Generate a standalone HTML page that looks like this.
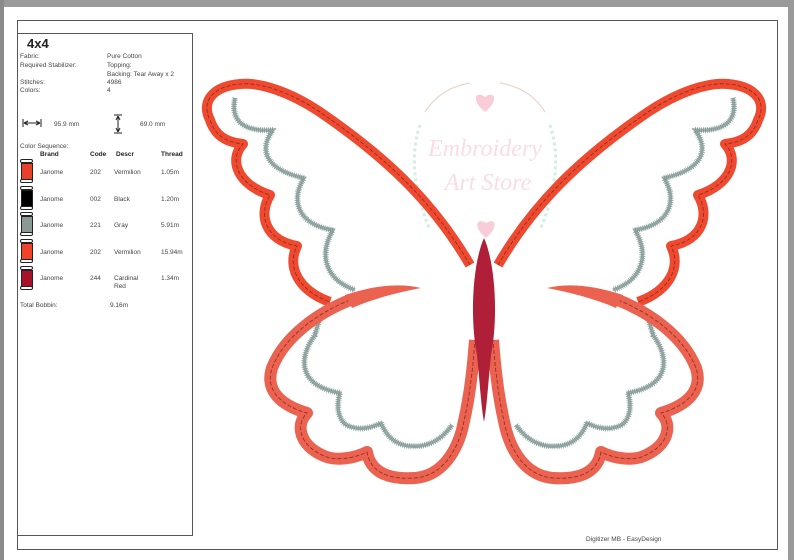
<!DOCTYPE html>
<html><head><meta charset="utf-8">
<style>
html,body{margin:0;padding:0}
body{width:794px;height:560px;position:relative;background:#fff;overflow:hidden;font-family:"Liberation Sans",sans-serif;color:#333}
.t{position:absolute;font-size:6.5px;line-height:8px;white-space:nowrap;color:#444}
.b{font-weight:bold;color:#222}
.sp{position:absolute;left:20px;width:13px;height:24px}
.sp .c{position:absolute;left:1px;top:4px;width:10px;height:16px;border:1px solid #222}
.sp .e{position:absolute;left:0;width:11px;height:2px;border:1px solid #222;border-radius:2px;background:#fff}
</style></head><body>
<div style="position:absolute;left:0;top:0;width:794px;height:7px;background:#9a9a9a"></div>
<div style="position:absolute;left:0;top:0;width:4px;height:560px;background:#8a8a8a"></div>
<div style="position:absolute;left:788px;top:0;width:6px;height:560px;background:#9a9a9a"></div>
<div style="position:absolute;left:17px;top:20px;width:759px;height:528px;border:1px solid #555"></div>
<div style="position:absolute;left:17px;top:33px;width:174px;height:501px;border:1px solid #555"></div>

<div class="t b" style="left:27px;top:37px;font-size:13px;line-height:14px">4x4</div>
<div class="t" style="left:20px;top:53px">Fabric:</div>
<div class="t" style="left:20px;top:62px">Required Stabilizer:</div>
<div class="t" style="left:107px;top:53px">Pure Cotton</div>
<div class="t" style="left:107px;top:62px">Topping:</div>
<div class="t" style="left:107px;top:71px">Backing: Tear Away x 2</div>
<div class="t" style="left:20px;top:79px">Stitches:</div>
<div class="t" style="left:20px;top:87px">Colors:</div>
<div class="t" style="left:107px;top:79px">4986</div>
<div class="t" style="left:107px;top:87px">4</div>

<svg style="position:absolute;left:22px;top:118px" width="20" height="10"><line x1="1" y1="1" x2="1" y2="9" stroke="#222"/><line x1="19" y1="1" x2="19" y2="9" stroke="#222"/><line x1="2" y1="5" x2="18" y2="5" stroke="#222"/><path d="M2 5 L6 3 M2 5 L6 7 M18 5 L14 3 M18 5 L14 7" stroke="#222"/></svg>
<div class="t" style="left:54px;top:121px">95.9 mm</div>
<svg style="position:absolute;left:112px;top:114px" width="12" height="20"><line x1="2" y1="1" x2="10" y2="1" stroke="#222"/><line x1="2" y1="19" x2="10" y2="19" stroke="#222"/><line x1="6" y1="2" x2="6" y2="18" stroke="#222"/><path d="M6 2 L4 6 M6 2 L8 6 M6 18 L4 14 M6 18 L8 14" stroke="#222"/></svg>
<div class="t" style="left:140px;top:121px">69.0 mm</div>

<div class="t" style="left:20px;top:143px">Color Sequence:</div>
<div class="t b" style="left:40px;top:151px">Brand</div>
<div class="t b" style="left:90px;top:151px">Code</div>
<div class="t b" style="left:116px;top:151px">Descr</div>
<div class="t b" style="left:161px;top:151px">Thread</div>

<div class="sp" style="top:159px"><div class="c" style="background:#e8402a"></div><div class="e" style="top:0"></div><div class="e" style="top:20px"></div></div>
<div class="sp" style="top:186px"><div class="c" style="background:#000"></div><div class="e" style="top:0"></div><div class="e" style="top:20px"></div></div>
<div class="sp" style="top:212px"><div class="c" style="background:#8a9996"></div><div class="e" style="top:0"></div><div class="e" style="top:20px"></div></div>
<div class="sp" style="top:239px"><div class="c" style="background:#f0432a"></div><div class="e" style="top:0"></div><div class="e" style="top:20px"></div></div>
<div class="sp" style="top:266px"><div class="c" style="background:#a8112a"></div><div class="e" style="top:0"></div><div class="e" style="top:20px"></div></div>

<div class="t" style="left:40px;top:169px">Janome</div><div class="t" style="left:90px;top:169px">202</div><div class="t" style="left:114px;top:169px">Vermilion</div><div class="t" style="left:161px;top:169px">1.05m</div>
<div class="t" style="left:40px;top:196px">Janome</div><div class="t" style="left:90px;top:196px">002</div><div class="t" style="left:114px;top:196px">Black</div><div class="t" style="left:161px;top:196px">1.20m</div>
<div class="t" style="left:40px;top:222px">Janome</div><div class="t" style="left:90px;top:222px">221</div><div class="t" style="left:114px;top:222px">Gray</div><div class="t" style="left:161px;top:222px">5.91m</div>
<div class="t" style="left:40px;top:249px">Janome</div><div class="t" style="left:90px;top:249px">202</div><div class="t" style="left:114px;top:249px">Vermilion</div><div class="t" style="left:161px;top:249px">15.94m</div>
<div class="t" style="left:40px;top:275px">Janome</div><div class="t" style="left:90px;top:275px">244</div><div class="t" style="left:114px;top:275px">Cardinal<br>Red</div><div class="t" style="left:161px;top:275px">1.34m</div>
<div class="t" style="left:20px;top:302px">Total Bobbin:</div>
<div class="t" style="left:110px;top:302px">9.16m</div>

<div class="t" style="left:586px;top:536px">Digitizer MB - EasyDesign</div>

<svg style="position:absolute;left:0;top:0" width="794" height="560">
<g opacity="0.7">
<path d="M425,112 Q440,88 470,83" fill="none" stroke="#e2c6b0" stroke-width="1.2"/>
<path d="M545,112 Q530,88 500,83" fill="none" stroke="#e2c6b0" stroke-width="1.2"/>
<path d="M420,125 Q405,170 430,230" fill="none" stroke="#bfe6da" stroke-width="3" stroke-dasharray="3 3"/>
<path d="M550,125 Q565,170 540,230" fill="none" stroke="#bfe6da" stroke-width="3" stroke-dasharray="3 3"/>
<path d="M485,112 C470,100 476,90 485,97 C494,90 500,100 485,112Z" fill="#f7b8c8"/>
<path d="M486,238 C472,226 477,217 486,223 C495,217 500,226 486,238Z" fill="#f7b8c8"/>
<text x="485" y="156" text-anchor="middle" font-family="Liberation Serif,serif" font-style="italic" font-size="24" fill="#f8d0da">Embroidery</text>
<text x="488" y="190" text-anchor="middle" font-family="Liberation Serif,serif" font-style="italic" font-size="24" fill="#f8d0da">Art Store</text>
</g>
<g id="L">
<path d="M470,265 C435,205 390,160 320,112 C290,92 260,82 240,84 C215,86 200,100 210,120 C215,135 225,142 243,144 C228,160 238,185 270,195 C258,215 265,240 297,246 C287,266 297,290 330,302" fill="none" stroke="#ef4a30" stroke-width="10" stroke-linejoin="round"/>
<path d="M470,265 C435,205 390,160 320,112 C290,92 260,82 240,84 C215,86 200,100 210,120 C215,135 225,142 243,144 C228,160 238,185 270,195 C258,215 265,240 297,246 C287,266 297,290 330,302" fill="none" stroke="#8a2a1c" stroke-width="0.8" stroke-dasharray="4 2"/>
<path id="g1" d="M235,98 C230,122 245,132 273,130 C258,150 266,170 304,178 C290,200 298,225 333,230 C318,255 326,280 355,290" fill="none" stroke="#9aaeab" stroke-width="3.5"/>
<path d="M235,98 C230,122 245,132 273,130 C258,150 266,170 304,178 C290,200 298,225 333,230 C318,255 326,280 355,290" fill="none" stroke="#7f9592" stroke-width="6" stroke-dasharray="0.7 1.3"/>
<path d="M330,305 C318,318 318,325 315,335 C300,355 295,385 340,393 C335,410 340,425 352,427 C360,430 372,428 381,423 C388,440 400,448 420,446 C435,444 445,435 452,425" fill="none" stroke="#9aaeab" stroke-width="3.5"/>
<path d="M330,305 C318,318 318,325 315,335 C300,355 295,385 340,393 C335,410 340,425 352,427 C360,430 372,428 381,423 C388,440 400,448 420,446 C435,444 445,435 452,425" fill="none" stroke="#7f9592" stroke-width="6" stroke-dasharray="0.7 1.3"/>
<path d="M350,300 C320,312 285,335 272,368 C265,390 280,405 307,413 C295,425 300,445 322,455 C335,462 355,458 367,452 C370,470 385,480 415,478 C440,476 455,455 462,430 C468,405 472,380 475,340" fill="none" stroke="#ec6250" stroke-width="12" stroke-linejoin="round"/>
<path d="M350,300 C320,312 285,335 272,368 C265,390 280,405 307,413 C295,425 300,445 322,455 C335,462 355,458 367,452 C370,470 385,480 415,478 C440,476 455,455 462,430 C468,405 472,380 475,340" fill="none" stroke="#8a2a1c" stroke-width="0.8" stroke-dasharray="4 2"/>
<path d="M345,295 C375,285 400,283 421,288 C400,292 375,298 352,308Z" fill="#ec6250"/>
</g>
<use href="#L" transform="translate(968,0) scale(-1,1)"/>
<path d="M484,238 C496,265 498,320 491,355 C488,385 487,405 484,422 C481,405 480,385 477,355 C470,320 472,265 484,238Z" fill="#b01f38"/>
</svg>
</body></html>
